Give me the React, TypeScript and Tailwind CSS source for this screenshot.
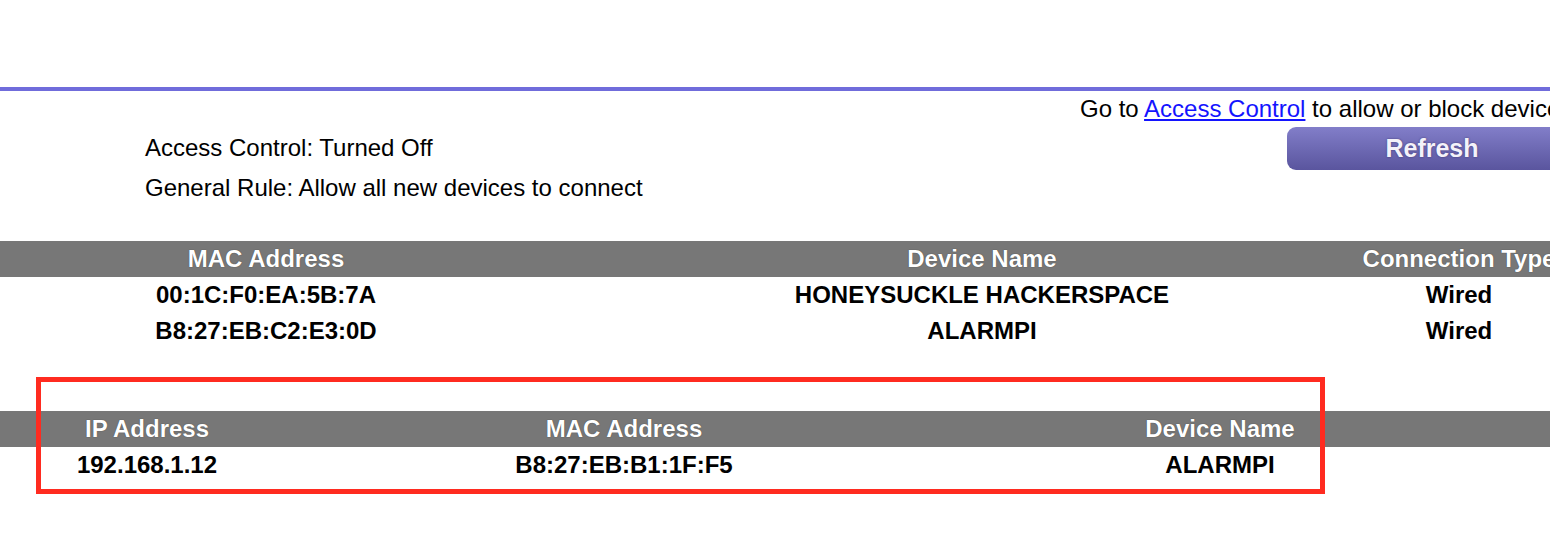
const devices = [
  { mac: "00:1C:F0:EA:5B:7A", name: "HONEYSUCKLE HACKERSPACE", type: "Wired" },
  { mac: "B8:27:EB:C2:E3:0D", name: "ALARMPI", type: "Wired" },
];

const headShadow = "[text-shadow:0_0_1px_rgba(0,0,0,0.6)]";

export default function App() {
  return (
    <div className="h-[535px] w-[1550px] overflow-hidden bg-white font-['Liberation_Sans',Arial,sans-serif] text-[24px] text-black">
      <div className="w-[1600px]">
        <div className="h-[87px]" />
        <div className="h-[4px] bg-[#706cdb]" />

        <div className="h-[36px] whitespace-nowrap pl-[1080px] leading-[36px]">
          Go to{" "}
          <a href="#" className="text-[#1414ff] underline">
            Access Control
          </a>{" "}
          to allow or block devices
        </div>

        <div className="flex">
          <div className="w-[1287px] pl-[145px] pt-px">
            <div className="h-[40px] leading-[40px]">Access Control: Turned Off</div>
            <div className="h-[40px] leading-[40px]">General Rule: Allow all new devices to connect</div>
          </div>
          <button className="h-[43px] w-[292px] rounded-l-[9px] bg-linear-to-b from-[#827ec9] to-[#5a559e] pr-[2px] text-[25px] font-bold text-[#f4f2fa] [text-shadow:0_0_2px_rgba(40,30,80,0.7)]">
            Refresh
          </button>
        </div>

        {/* attached devices */}
        <div className="mt-[33px]">
          <div className={`flex h-[36px] bg-[#777777] font-bold leading-[36px] text-white ${headShadow}`}>
            <div className="w-[532px] text-center">MAC Address</div>
            <div className="ml-[80px] w-[740px] text-center">Device Name</div>
            <div className="w-[214px] whitespace-nowrap text-center">Connection Type</div>
          </div>
          {devices.map((d) => (
            <div key={d.mac} className="flex h-[36px] font-bold leading-[36px]">
              <div className="w-[532px] text-center">{d.mac}</div>
              <div className="ml-[80px] w-[740px] text-center">{d.name}</div>
              <div className="w-[214px] text-center">{d.type}</div>
            </div>
          ))}
        </div>

        {/* wireless devices */}
        <div className="relative mt-[62px]">
          <div className={`flex h-[36px] bg-[#777777] font-bold leading-[36px] text-white ${headShadow}`}>
            <div className="w-[294px] text-center">IP Address</div>
            <div className="w-[660px] text-center">MAC Address</div>
            <div className="w-[532px] text-center">Device Name</div>
          </div>
          <div className="flex h-[36px] font-bold leading-[36px]">
            <div className="w-[294px] text-center">192.168.1.12</div>
            <div className="w-[660px] text-center">B8:27:EB:B1:1F:F5</div>
            <div className="w-[532px] text-center">ALARMPI</div>
          </div>
          <div className="pointer-events-none absolute left-[36px] top-[-34px] h-[117px] w-[1289px] border-[5px] border-[#ff2b20]" />
        </div>
      </div>
    </div>
  );
}
